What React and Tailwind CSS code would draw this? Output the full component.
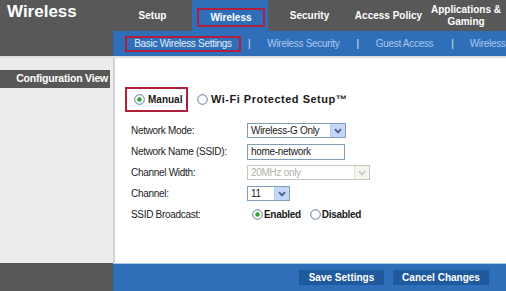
import React from 'react'

function Radio({ checked }) {
  return (
    <svg width="11" height="11" viewBox="0 0 11 11" className="shrink-0">
      <circle cx="5.5" cy="5.5" r="4.8" fill="#fff" stroke="#5d7a99" strokeWidth="1" />
      {checked && <circle cx="5.5" cy="5.5" r="2.2" fill="#2aa52a" />}
    </svg>
  )
}

function Chevron({ disabled }) {
  return (
    <div className={disabled ? 'w-[15px] h-full flex items-center justify-center bg-[#f5f4ef] border-l border-[#e3e2da]' : 'w-[15px] h-full flex items-center justify-center bg-[#c6d6f8] border-l border-[#b4c8f1]'}>
      <svg width="8" height="6" viewBox="0 0 8 6">
        <path d="M1 1.2 L4 4.4 L7 1.2" fill="none" stroke={disabled ? '#cbc9bd' : '#4a5f8c'} strokeWidth="1.8" />
      </svg>
    </div>
  )
}

function Select({ value, className, disabled }) {
  return (
    <div className={(disabled ? 'border-[#c9c7ba] text-[#b3b1a6] ' : 'border-[#7f9db9] text-[#1a1a1a] ') + 'h-[15px] flex items-center border bg-white ' + className}>
      <span className="flex-1 pl-[3px] text-[10px] leading-none tracking-[-0.3px] whitespace-nowrap">{value}</span>
      <Chevron disabled={disabled} />
    </div>
  )
}

export default function App() {
  const rows = [
    ['Network Mode:', <Select value="Wireless-G Only" className="w-[99px]" />],
    ['Network Name (SSID):', <div className="w-[98px] h-[16px] border border-[#7f9db9] bg-white flex items-center pl-[3px] text-[10px] tracking-[-0.3px] text-[#1a1a1a]">home-network</div>],
    ['Channel Width:', <Select value="20MHz only" className="w-[123px]" disabled />],
    ['Channel:', <Select value="11" className="w-[43px]" />],
    ['SSID Broadcast:', (
      <div className="flex items-center pl-[5px] text-[10px] font-bold text-[#1a1a1a]">
        <Radio checked />
        <span className="ml-[1px]">Enabled</span>
        <span className="ml-[9px]"><Radio /></span>
        <span className="ml-[1px]">Disabled</span>
      </div>
    )],
  ]

  return (
    <div className="w-[506px] h-[291px] flex flex-col bg-[#ececec] overflow-hidden font-['Liberation_Sans',Arial,sans-serif]">
      {/* header */}
      <div className="flex h-[56px] bg-[#585858]">
        <div className="w-[113px] shrink-0 pl-[7px] pt-[1px]">
          <h1 className="text-[17px] font-bold text-white leading-[22px]">Wireless</h1>
        </div>
        <div className="flex-1 min-w-0 overflow-hidden flex flex-col">
          <div className="h-[31px] flex text-[10px] font-bold text-white whitespace-nowrap">
            <div className="w-[79px] shrink-0 flex items-center justify-center">Setup</div>
            <div className="w-[76px] shrink-0 bg-[#2f6fba] pl-[5px] pr-[3px] pt-[8px] pb-[4px]">
              <div className="h-full border-2 border-[#b01f3c] flex items-center justify-center">Wireless</div>
            </div>
            <div className="w-[83px] shrink-0 flex items-center justify-center">Security</div>
            <div className="w-[75px] shrink-0 flex items-center justify-center">Access Policy</div>
            <div className="w-[80px] shrink-0 flex flex-col items-center justify-center leading-[12px]">
              <span>Applications &amp;</span>
              <span>Gaming</span>
            </div>
          </div>
          <div className="h-[25px] bg-[#2f6fba] flex items-center text-[10px] tracking-[-0.3px] whitespace-nowrap text-[#a9c8ef]">
            <div className="ml-[12px] w-[116px] shrink-0 h-[16px] border-2 border-[#b01f3c] flex items-center justify-center text-[#e4edf9]">Basic Wireless Settings</div>
            <span className="ml-[7px] text-[#dfe9f7]">|</span>
            <span className="ml-[17px]">Wireless Security</span>
            <span className="ml-[17px] text-[#dfe9f7]">|</span>
            <span className="ml-[17px]">Guest Access</span>
            <span className="ml-[18px] text-[#dfe9f7]">|</span>
            <span className="ml-[16px]">Wireless</span>
          </div>
        </div>
      </div>
      <div className="h-[2px] bg-[#dedede]" />

      {/* body */}
      <div className="flex flex-1">
        <div className="w-[113px] shrink-0 pt-[12px]">
          <div className="w-[110px] h-[18px] bg-[#585858] flex items-center justify-end pr-[2px] text-[10.5px] font-bold text-white tracking-[-0.2px] whitespace-nowrap">
            Configuration View
          </div>
        </div>
        <div className="flex-1 min-w-0 bg-white border-l-2 border-[#d2d2d2] pl-[10px] pt-[29px]">
          <div className="flex items-center font-bold text-[#1a1a1a] whitespace-nowrap">
            <div className="w-[63px] h-[25px] border-2 border-[#b01f3c] flex items-center pl-[7px] gap-[3px] text-[10px]">
              <Radio checked />
              <span>Manual</span>
            </div>
            <div className="ml-[9px] flex items-center gap-[3px] text-[11px] tracking-[0.5px]">
              <Radio />
              <span>Wi-Fi Protected Setup™</span>
            </div>
          </div>
          <div className="mt-[8px] pl-[6px] grid grid-cols-[116px_1fr] auto-rows-[21px] items-center text-[10px] tracking-[-0.3px] text-[#222]">
            {rows.map(([label, control]) => (
              <React.Fragment key={label}>
                <span className="whitespace-nowrap">{label}</span>
                <div>{control}</div>
              </React.Fragment>
            ))}
          </div>
        </div>
      </div>

      {/* footer */}
      <div className="h-[28px] flex">
        <div className="w-[113px] shrink-0 bg-[#585858]" />
        <div className="flex-1 bg-[#2f6fba] border-t border-[#a9cdf0] flex items-center justify-end pr-[17px] gap-[9px] text-[10px] font-bold text-white whitespace-nowrap">
          <div className="w-[85px] h-[15px] bg-[#1f5a9e] flex items-center justify-center">Save Settings</div>
          <div className="w-[96px] h-[15px] bg-[#1f5a9e] flex items-center justify-center">Cancel Changes</div>
        </div>
      </div>
    </div>
  )
}
